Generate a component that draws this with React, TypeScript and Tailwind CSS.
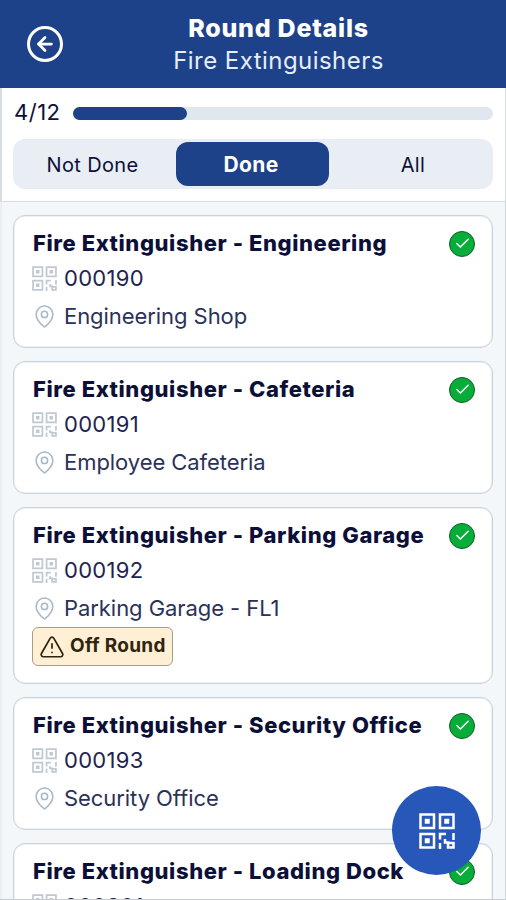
import { ArrowLeft, Check, MapPin, TriangleAlert } from "lucide-react";

interface Item {
  name: string;
  code: string;
  location: string;
  offRound?: boolean;
}

const items: Item[] = [
  { name: "Engineering", code: "000190", location: "Engineering Shop" },
  { name: "Cafeteria", code: "000191", location: "Employee Cafeteria" },
  { name: "Parking Garage", code: "000192", location: "Parking Garage - FL1", offRound: true },
  { name: "Security Office", code: "000193", location: "Security Office" },
  { name: "Loading Dock", code: "000201", location: "" },
];

const QrIcon = ({ className }: { className: string }) => (
  <svg viewBox="0 0 36 36" fill="none" stroke="currentColor" strokeWidth="2.5" className={className}>
    <path d="M1.500 1.500h13.500v13.500h-13.500zM21 1.500h13.500v13.500h-13.500zM1.500 21h13.500v13.500h-13.500z" />
    <path d="M7 7h2.500v2.500h-2.500zM26.500 7h2.500v2.500h-2.500zM7 26.500h2.500v2.500h-2.500z" />
    <path d="M21 26.500V21h6M34.500 20v7M21 30v6M26 26v3.500h3v5h5.500V30H29" />
  </svg>
);

const RoundCard = ({ item }: { item: Item }) => (
  <div className="shrink-0 rounded-[12px] border border-[#cbd3d9] bg-white pt-[9px] pr-[18px] pb-[11px] pl-[19px] shadow-[inset_0_0_0_1px_#edf1f3]">
    <div className="flex h-[37px] items-center justify-between">
      <h2 className="whitespace-nowrap text-[22px] font-extrabold tracking-[0.58px]">
        Fire Extinguisher - {item.name}
      </h2>
      <span className="mr-[-1px] flex size-[26px] shrink-0 items-center justify-center rounded-full border border-[#125c28] bg-[#06ad39] text-white">
        <Check size={17} strokeWidth={2.200} />
      </span>
    </div>
    <div className="flex h-8 items-center gap-[7px]">
      <QrIcon className="ml-[-1px] size-[25px] text-[#c0c8d4]" />
      <span className="text-[22px] tracking-[0.3px] text-[#1e2450]">{item.code}</span>
    </div>
    {item.location && (
      <div className="mt-1 flex h-[37px] items-center gap-[7px]">
        <MapPin size={25} strokeWidth={1.500} className="ml-[-1px] text-[#aab8c8]" />
        <span className="text-[22px] tracking-[-0.060px] text-[#2b3159]">{item.location}</span>
      </div>
    )}
    {item.offRound && (
      <div className="mb-[5px] ml-[-1px] flex h-[39px] w-[141px] items-center gap-[5px] rounded-[6px] border border-[#a99d88] bg-[#feefd5] pl-[6px] text-[#2f2410]">
        <TriangleAlert size={26} strokeWidth={1.600} />
        <span className="whitespace-nowrap text-[19px] font-bold tracking-[0.3px]">Off Round</span>
      </div>
    )}
    {item.location && <div className="h-px" />}
  </div>
);

export default function App() {
  return (
    <div className="relative flex h-[900px] w-[506px] flex-col overflow-hidden border-b border-[#c4cbd1] bg-[#f3f7f9] font-['Inter',sans-serif] text-[#0c1038]">
      <header className="flex h-[88px] shrink-0 items-start bg-[#1e4289] text-white">
        <button className="mt-[26px] ml-[27px] flex size-[36px] shrink-0 items-center justify-center rounded-full border-3 border-white">
          <ArrowLeft size={22} strokeWidth={3} />
        </button>
        <div className="flex-1 pt-[12px] pr-3 text-center">
          <h1 className="text-[25px] leading-8 font-extrabold tracking-[0.75px]">Round Details</h1>
          <p className="mt-px text-[24px] leading-8 tracking-[0.45px] text-[#e6edfb]">Fire Extinguishers</p>
        </div>
      </header>

      <section className="h-[114px] shrink-0 border-r border-b border-l-2 border-[#d5dee5] bg-white pr-3 pl-[11px]">
        <div className="flex h-[51px] items-center gap-[13px]">
          <span className="w-[47px] pb-0.5 pl-px text-[22px] tracking-[0.5px]">4/12</span>
          <div className="h-[13px] flex-1 rounded-full bg-[#e0e7ee]">
            <div className="h-full rounded-full bg-[#1e4289]" style={{ width: "27.2%" }} />
          </div>
        </div>
        <div className="flex h-[50px] items-center rounded-[12px] bg-[#e9eef5] px-[3px] text-[20px] tracking-[0.35px]">
          <button className="h-11 w-[160px] pt-[2px] pr-[7px]">Not Done</button>
          <button className="h-11 w-[153px] rounded-[12px] bg-[#1e4289] pt-px pr-[3px] text-[21px] font-bold text-white">
            Done
          </button>
          <button className="h-11 flex-1 pt-[2px] pl-[7px]">All</button>
        </div>
      </section>

      <main className="flex min-h-0 flex-1 flex-col gap-[13px] overflow-hidden border-r border-l-2 border-r-[#ccd6dd] border-l-[#e9eff2] pt-[13px] pr-3 pl-[11px]">
        {items.map((item) => (
          <RoundCard key={item.code} item={item} />
        ))}
      </main>

      <button className="absolute top-[786px] left-[392px] flex size-[89px] items-center justify-center rounded-full bg-[#2757b9] text-white">
        <QrIcon className="size-9" />
      </button>
    </div>
  );
}
